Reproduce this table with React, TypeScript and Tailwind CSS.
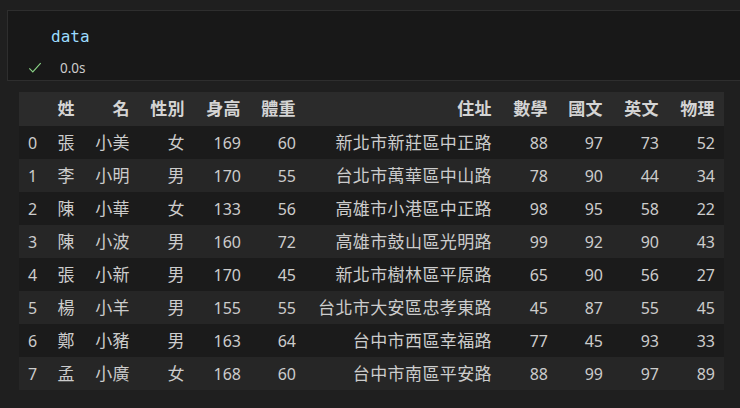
const headers = ["姓", "名", "性別", "身高", "體重", "住址", "數學", "國文", "英文", "物理"];

const rows: (string | number)[][] = [
  ["張", "小美", "女", 169, 60, "新北市新莊區中正路", 88, 97, 73, 52],
  ["李", "小明", "男", 170, 55, "台北市萬華區中山路", 78, 90, 44, 34],
  ["陳", "小華", "女", 133, 56, "高雄市小港區中正路", 98, 95, 58, 22],
  ["陳", "小波", "男", 160, 72, "高雄市鼓山區光明路", 99, 92, 90, 43],
  ["張", "小新", "男", 170, 45, "新北市樹林區平原路", 65, 90, 56, 27],
  ["楊", "小羊", "男", 155, 55, "台北市大安區忠孝東路", 45, 87, 55, 45],
  ["鄭", "小豬", "男", 163, 64, "台中市西區幸福路", 77, 45, 93, 33],
  ["孟", "小廣", "女", 168, 60, "台中市南區平安路", 88, 99, 97, 89],
];

const widths = ["w-[34px]", "w-[55px]", "w-[55px]", "w-[56px]", "w-[55px]", "w-[196px]", "w-[56px]", "w-[55px]", "w-[56px]", "w-[56px]"];

export default function App() {
  return (
    <div
      className="w-[740px] h-[408px] overflow-hidden bg-[#1f1f1f] pt-[10px]"
      style={{ fontFamily: "'Noto Sans', 'Noto Sans CJK TC', sans-serif" }}>
      {/* code cell */}
      <div className="ml-[7px] h-[71px] border border-r-0 border-[#2e2e2e] bg-[#181818] relative">
        <div
          className="absolute left-[43px] top-[14px] text-[16px] text-[#9cdcfe]"
          style={{ fontFamily: "'DejaVu Sans Mono', monospace" }}>
          data
        </div>
        <div className="absolute left-[20px] top-[47px] flex items-center">
          <svg width="14" height="14" viewBox="0 0 16 16" fill="none">
            <path d="M1.5 8.5 L5.5 12.5 L14.5 2.5" stroke="#89d185" strokeWidth="1.3" />
          </svg>
          <span className="ml-[18px] text-[13.5px] text-[#cccccc]">0.0s</span>
        </div>
      </div>

      {/* output table */}
      <table className="ml-[19px] mt-[11px] table-fixed border-collapse text-[16px] text-[#cccccc]">
        <thead>
          <tr className="h-[34px] bg-[#2b2b2b]">
            <th className="w-[31px]"></th>
            {headers.map((h, i) => (
              <th key={h} className={widths[i] + " text-right pr-[9px] text-[17px] tracking-[0.4px] font-bold text-[#d4d4d4] whitespace-nowrap"}>
                {h}
              </th>
            ))}
          </tr>
        </thead>
        <tbody>
          {rows.map((r, ri) => (
            <tr key={ri} className={"h-[33px] " + (ri % 2 === 0 ? "bg-[#1b1b1b]" : "bg-[#262626]")}>
              <td className="pl-[9px] text-left">{ri}</td>
              {r.map((c, ci) => (
                <td
                  key={ci}
                  className={"text-right pr-[9px] whitespace-nowrap " + (typeof c === "string" ? "text-[17px] tracking-[0.4px]" : "")}>
                  {c}
                </td>
              ))}
            </tr>
          ))}
        </tbody>
      </table>
    </div>
  );
}
